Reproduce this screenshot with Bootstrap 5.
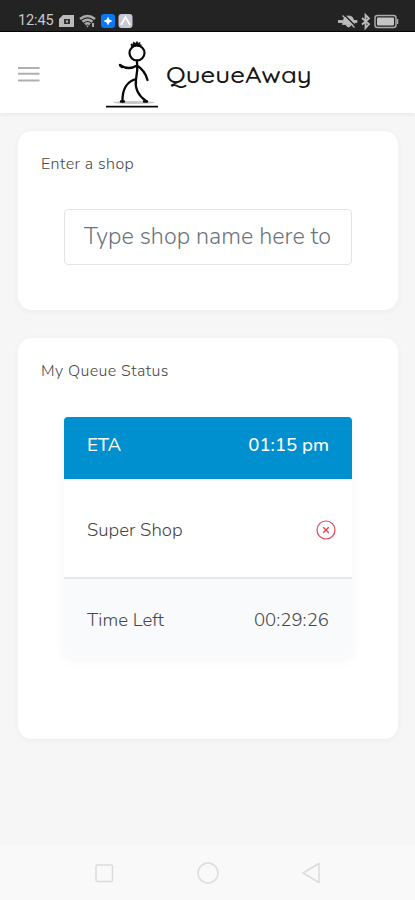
<!DOCTYPE html>
<html lang="en">
<head>
<meta charset="utf-8">
<meta name="viewport" content="width=device-width, initial-scale=1">
<title>QueueAway</title>
<link href="https://cdn.jsdelivr.net/npm/bootstrap@5.3.0/dist/css/bootstrap.min.css" rel="stylesheet">
<style>
body{background:#f6f6f6;font-family:Nunito,Lato,"Open Sans",sans-serif;color:#484848;height:900px;overflow:hidden}
svg{display:block;flex:none}
.statusbar{height:32px;background:#232323;border-bottom:1px solid #050505;padding:11px 15px 0 18px;color:#c8c8c8;font:400 14.5px/22px Roboto,sans-serif}
.clock{width:39px;letter-spacing:-.1px}
.topbar{height:81px;background:#fff;box-shadow:0 1px 4px rgba(0,0,0,.07);padding-left:18px}
.menu-btn{width:22px;height:22px;margin-top:2px}
.brand{margin-left:55px}
.brand-name{font:500 23px/30px "Quicksand","Comfortaa",Lato,sans-serif;fill:#161616}
.panel{background:#fff;border-radius:14px;box-shadow:0 1px 7px rgba(0,0,0,.045);margin:0 17px 0 18px;padding:22px 46px 0 23px}
.panel-shop{height:179px;margin-top:18px}
.panel-queue{height:401px;margin-top:28px}
.panel-title{font-size:16px;font-weight:350;line-height:22px;letter-spacing:.4px;margin:0}
.shop-input{height:56px;margin:34px 0 0 23px;width:288px;border:1.5px solid #e4e4e6;border-radius:4px;font-size:23.3px;font-weight:350;padding:0 19px 2px 19px;letter-spacing:.02px}
.shop-input::placeholder{color:#6c757d}
.ticket{width:288px;margin:35px 0 0 23px;border-radius:4px 4px 10px 10px;box-shadow:0 2px 12px rgba(0,0,0,.045);font-size:18.6px;font-weight:350;line-height:24px}
.ticket-head{height:62px;background:#008fcf;color:#fff;border-radius:4px 4px 0 0;padding:16px 23px 0 23px;font-weight:500}
.ticket-shop{height:98px;padding:4px 16px 0 23px}
.ticket-time{height:82px;background:#f8fafc;border-top:2px solid #e4e7ec;border-radius:0 0 10px 10px;padding:1px 23px 0 23px}
.softkeys{height:55px;background:#f9f9f9;padding:0 94px}
</style>
</head>
<body class="d-flex flex-column">
<div class="statusbar d-flex justify-content-between flex-shrink-0">
  <div class="d-flex align-items-center">
    <span class="clock">12:45</span>
    <svg width="76" height="16" viewBox="0 0 76 16">
      <path d="M6 2h11v12H2V6z" fill="#bbb"/><rect x="7" y="6" width="6" height="5" fill="#333"/><rect x="9" y="7.5" width="2" height="2" fill="#bbb"/>
      <g fill="none" stroke="#aaa" stroke-width="2.500"><path d="M23 6q7.500-6 15 0M25.500 8.700q5-4 10 0M28 11.300q2.500-2 5 0"/></g><path d="M29 12.500h3l-1.500 2zM35 10h2v4h-2z" fill="#aaa"/>
      <rect x="44" y="1" width="14" height="14" rx="3" fill="#0878f5"/><path d="M51 3.500l1.400 3.100 3.100 1.400-3.100 1.400L51 12.500l-1.400-3.100L46.500 8l3.100-1.400z" fill="#fff"/>
      <rect x="61.500" y="1" width="14" height="14" rx="3" fill="#c8c8d5"/><path d="M64 12l4.500-8 4.500 8" fill="none" stroke="#fff" stroke-width="1.600"/>
    </svg>
  </div>
  <svg width="62" height="20" viewBox="0 0 62 20">
    <path d="M4.500 13.500l1-3.500q0-5 5-5t5 5l1 3.500zM8 14h5q-2.500 4-5 0zM0 9.500h5v2H0zM15 9.500h4v2h-4z" fill="#bbb" stroke="#bbb" stroke-width=".8"/><path d="M6 3.500l11 11" stroke="#232323" stroke-width="1.500"/><path d="M4.500 4.500l12 12" stroke="#bbb" stroke-width="1.300"/>
    <path d="M24 7l7 6-3.500 4V4l3.500 3.500-7 6" fill="none" stroke="#bbb" stroke-width="1.800"/>
    <rect x="37" y="4.500" width="21" height="12" rx="2.500" fill="none" stroke="#aaa" stroke-width="1.500"/><rect x="39" y="6.500" width="17" height="8" rx="1" fill="#c4c4c4"/><path d="M59.500 8v5" stroke="#aaa" stroke-width="1.500"/>
  </svg>
</div>
<nav class="topbar d-flex align-items-center flex-shrink-0">
  <a href="#" class="menu-btn" aria-label="Menu"><svg width="22" height="22" viewBox="0 0 22 22" stroke="#b0b0b0" stroke-width="2"><path d="M0 5h21.500M0 10.700h21.500M0 17.500h21.500"/></svg></a>
  <a href="#" class="brand d-flex align-items-center text-decoration-none">
    <svg width="70" height="76" viewBox="95 35 70 76" fill="none" stroke="#090909" stroke-linecap="round" stroke-linejoin="round">
      <ellipse cx="134" cy="102.500" rx="21" ry="1.400" fill="#c5c5c5" stroke="none"/>
      <circle cx="137" cy="53" r="7.500" stroke-width="2.200"/>
      <path d="M131.500 46.500l-.5-2.500 2 .5.500-2.500 2 1.500 1.500-2 1 2 2-1-.5 2 2 .5-1.500 1.500q-4-1.500-8.500 0z" fill="#090909" stroke-width=".8"/>
      <path d="M137 60.500q1 10-1 19-2 13 10 21.500M136 79q-14 4-13.500 22.500M137 65.500q-8 5-16.500 0M137 65.500q8 5 10.500 14.500" stroke-width="2.300"/>
      <path d="M121 101.500h3M144 101.500h3M120 65l2 2" stroke-width="2.500"/>
      <path d="M106 106.700h52" stroke-width="1.700" stroke-linecap="butt"/>
    </svg>
    <svg width="150" height="40" viewBox="165 55 150 40"><text class="brand-name" x="166" y="84.500" textLength="145.500" lengthAdjust="spacingAndGlyphs">QueueAway</text></svg>
  </a>
</nav>
<main class="flex-grow-1">
  <section class="panel panel-shop">
    <h1 class="panel-title">Enter a shop</h1>
    <input class="form-control shop-input" type="text" placeholder="Type shop name here to join" aria-label="Shop name">
  </section>
  <section class="panel panel-queue">
    <h2 class="panel-title">My Queue Status</h2>
    <div class="ticket">
      <div class="ticket-head d-flex justify-content-between"><span>ETA</span><span>01:15 pm</span></div>
      <div class="ticket-shop d-flex justify-content-between align-items-center"><span>Super Shop</span>
        <svg width="20" height="20" viewBox="0 0 20 20" fill="none" stroke="#e04353"><circle cx="10" cy="10" r="9" stroke-width="1.200"/><path d="M7.200 7.200l5.600 5.600M12.800 7.200l-5.600 5.600" stroke-width="1.400"/></svg>
      </div>
      <div class="ticket-time d-flex justify-content-between align-items-center"><span>Time Left</span><span>00:29:26</span></div>
    </div>
  </section>
</main>
<footer class="softkeys d-flex justify-content-between align-items-center flex-shrink-0">
  <svg width="20" height="20" viewBox="0 0 20 20" fill="none" stroke="#dcdcdc" stroke-width="1.500"><rect x="2" y="2" width="16.500" height="16.500" rx="1.500"/></svg>
  <svg width="22" height="22" viewBox="0 0 22 22" fill="none" stroke="#dcdcdc" stroke-width="1.500"><circle cx="11" cy="11" r="10"/></svg>
  <svg width="20" height="22" viewBox="0 0 20 22" fill="none" stroke="#dcdcdc" stroke-width="1.500" stroke-linejoin="round"><path d="M2 11L18 1.500v19z"/></svg>
</footer>
<script src="https://cdn.jsdelivr.net/npm/bootstrap@5.3.0/dist/js/bootstrap.bundle.min.js"></script>
</body>
</html>
